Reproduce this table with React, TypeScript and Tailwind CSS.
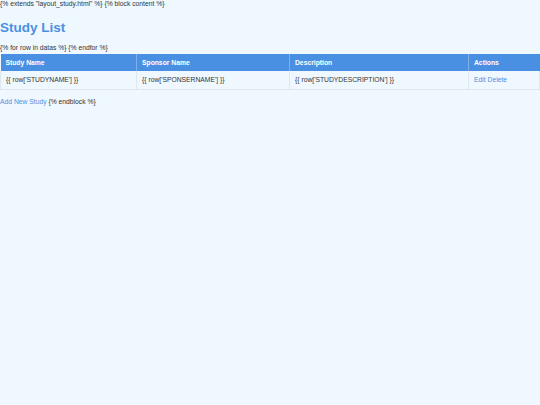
import React from "react";

export default function App() {
  const font = { fontFamily: '"Liberation Sans", Arial, Helvetica, sans-serif' };
  return (
    <div
      className="min-h-[405px] w-[540px] bg-[#f0f8ff] text-[6.75px] leading-[1.15] text-[#333333]"
      style={font}
    >
      <div>{"{% extends \"layout_study.html\" %} {% block content %}"}</div>
      <h1 className="mt-[12px] mb-[9px] text-[13.5px] font-bold leading-[1.15] text-[#4a90e2]">Study List</h1>
      <div>{"{% for row in datas %} {% endfor %}"}</div>
      <table className="mt-[1.5px] mb-[8px] w-full border-collapse">
        <thead>
          <tr className="bg-[#4a90e2] text-white">
            <th className="w-[136px] border-r border-[#7fb0ea] px-[5px] py-[5px] text-left font-bold">Study Name</th>
            <th className="w-[153px] border-r border-[#7fb0ea] px-[5px] py-[5px] text-left font-bold">Sponsor Name</th>
            <th className="w-[179px] border-r border-[#7fb0ea] px-[5px] py-[5px] text-left font-bold">Description</th>
            <th className="px-[5px] py-[5px] text-left font-bold">Actions</th>
          </tr>
        </thead>
        <tbody>
          <tr className="border-b border-[#dfe7ef]">
            <td className="border-x border-[#dfe7ef] px-[5px] py-[5px]">{"{{ row['STUDYNAME'] }}"}</td>
            <td className="border-r border-[#dfe7ef] px-[5px] py-[5px]">{"{{ row['SPONSERNAME'] }}"}</td>
            <td className="border-r border-[#dfe7ef] px-[5px] py-[5px]">{"{{ row['STUDYDESCRIPTION'] }}"}</td>
            <td className="border-r border-[#dfe7ef] px-[5px] py-[5px] text-[#4a90e2]">
              <a href="#" className="text-[#4a90e2]">Edit</a> <a href="#" className="text-[#4a90e2]">Delete</a>
            </td>
          </tr>
        </tbody>
      </table>
      <div>
        <a href="#" className="text-[#4a90e2]">Add New Study</a> {"{% endblock %}"}
      </div>
    </div>
  );
}
